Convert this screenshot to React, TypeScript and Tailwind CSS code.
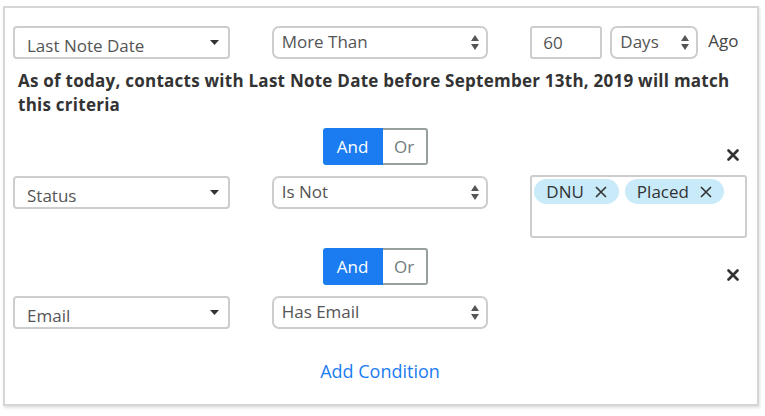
import React from "react";

const font = { fontFamily: "'Open Sans', sans-serif" };

function Caret() {
  return (
    <svg width="9" height="5" viewBox="0 0 9 5" className="shrink-0">
      <path d="M0 0 L9 0 L4.5 5 Z" fill="#333" />
    </svg>
  );
}

function UpDown() {
  return (
    <svg width="8" height="15" viewBox="0 0 8 15" className="shrink-0">
      <path d="M4 0 L8 6 L0 6 Z" fill="#555" />
      <path d="M0 9 L8 9 L4 15 Z" fill="#555" />
    </svg>
  );
}

function FieldSelect({ label }: { label: string }) {
  return (
    <div className="h-[33px] w-full border-2 border-[#cdcdcd] rounded-[4px] bg-white flex items-center pl-[12px] pr-[9px]">
      <span className="flex-1 text-[17px] text-[#555] pt-[5px] leading-none">{label}</span>
      <Caret />
    </div>
  );
}

function NativeSelect({ label, className = "" }: { label: string; className?: string }) {
  return (
    <div className={`h-[33px] border-2 border-[#cdcdcd] rounded-[7px] bg-white flex items-center pl-[8px] pr-[7px] ${className}`}>
      <span className="flex-1 text-[17px] text-[#555] pb-[3px] leading-none">{label}</span>
      <UpDown />
    </div>
  );
}

function Toggle() {
  return (
    <div className="flex h-[37px] ml-[51px]">
      <div className="w-[60px] bg-[#1b7cf2] rounded-l-[3px] flex items-center justify-center text-white text-[17px]">And</div>
      <div className="w-[45px] border-2 border-[#95a09f] border-l-0 rounded-r-[3px] flex items-center justify-center text-[#6f7c7a] text-[17px]">Or</div>
    </div>
  );
}

function CloseX() {
  return (
    <svg width="12" height="12" viewBox="0 0 12 12">
      <path d="M1.5 1.5 L10.5 10.5 M10.5 1.5 L1.5 10.5" stroke="#333" strokeWidth="2.6" strokeLinecap="round" />
    </svg>
  );
}

function Tag({ label }: { label: string }) {
  return (
    <div className="h-[25px] rounded-full bg-[#c8eaf9] flex items-center pl-[12px] pr-[12px] gap-[11px] text-[17px] text-[#333]">
      <span>{label}</span>
      <svg width="12" height="12" viewBox="0 0 12 12">
        <path d="M1 1 L11 11 M11 1 L1 11" stroke="#333" strokeWidth="1.6" />
      </svg>
    </div>
  );
}

export default function App() {
  return (
    <div className="w-[765px] h-[416px] bg-white" style={font}>
      <div className="absolute left-[3px] top-[6px] w-[756px] h-[400px] border-2 border-[#d6d6d6] shadow-[1px_2px_3px_rgba(0,0,0,0.12)] pl-[8px] pr-[10px] pt-[18px]">
        <div className="grid grid-cols-3 gap-x-[42px] items-center">
          <FieldSelect label="Last Note Date" />
          <NativeSelect label="More Than" />
          <div className="flex items-center">
            <div className="w-[72px] h-[33px] border-2 border-[#cdcdcd] rounded-[3px] flex items-center pl-[11px] text-[17px] text-[#555]">60</div>
            <NativeSelect label="Days" className="w-[88px] ml-[8px]" />
            <span className="ml-[10px] text-[17px] text-[#444] pb-[3px]">Ago</span>
          </div>
        </div>
        <div className="mt-[10px] pl-[5px] text-[17px] leading-[24px] font-bold tracking-[0.25px] text-[#333]">
          As of today, contacts with Last Note Date before September 13th, 2019 will match this criteria
        </div>

        <div className="grid grid-cols-3 gap-x-[42px] mt-[11px] items-end">
          <div />
          <Toggle />
          <div className="flex justify-end pr-[8px] pb-[4px]"><CloseX /></div>
        </div>
        <div className="grid grid-cols-3 gap-x-[42px] mt-[11px] items-start">
          <FieldSelect label="Status" />
          <NativeSelect label="Is Not" />
          <div className="h-[63px] -mt-[1px] border-2 border-[#cdcdcd] rounded-[3px] flex items-start gap-[6px] pl-[2px] pt-[2px]">
            <Tag label="DNU" />
            <Tag label="Placed" />
          </div>
        </div>

        <div className="grid grid-cols-3 gap-x-[42px] mt-[10px] items-end">
          <div />
          <Toggle />
          <div className="flex justify-end pr-[8px] pb-[4px]"><CloseX /></div>
        </div>
        <div className="grid grid-cols-3 gap-x-[42px] mt-[11px] items-start">
          <FieldSelect label="Email" />
          <NativeSelect label="Has Email" />
          <div />
        </div>

        <div className="mt-[30px] text-center text-[18px] text-[#1b7cf2] leading-[24px]">Add Condition</div>
      </div>
    </div>
  );
}
